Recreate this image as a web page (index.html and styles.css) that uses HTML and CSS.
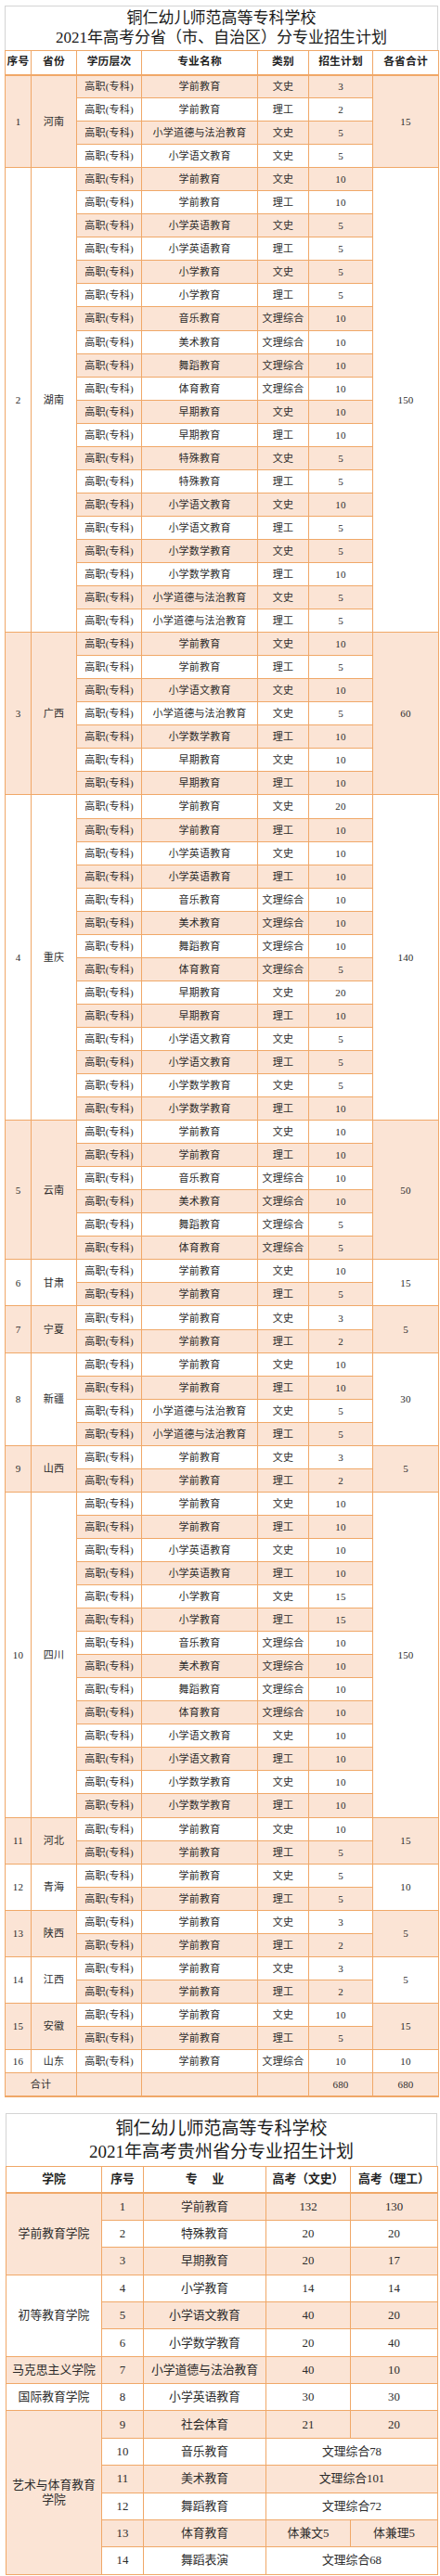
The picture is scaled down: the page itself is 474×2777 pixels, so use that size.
FILE: index.html
```html
<!DOCTYPE html>
<html lang="zh-CN">
<head>
<meta charset="utf-8">
<title>铜仁幼儿师范高等专科学校 2021年招生计划</title>
<link rel="stylesheet" href="styles.css">
</head>
<body>
<div class="page">
  <section class="plan plan-1">
    <div class="title title-1">铜仁幼儿师范高等专科学校<br>2021年高考分省（市、自治区）分专业招生计划</div>
    <table class="t1">
      <colgroup><col class="c1"><col class="c2"><col class="c3"><col class="c4"><col class="c5"><col class="c6"><col class="c7"></colgroup>
      <thead>
        <tr><th>序号</th><th>省份</th><th>学历层次</th><th>专业名称</th><th>类别</th><th>招生计划</th><th>各省合计</th></tr>
      </thead>
      <tbody>
        <tr class="s"><td class="po" rowspan="4">1</td><td class="po" rowspan="4">河南</td><td>高职(专科)</td><td>学前教育</td><td>文史</td><td>3</td><td class="po" rowspan="4">15</td></tr>
        <tr><td>高职(专科)</td><td>学前教育</td><td>理工</td><td>2</td></tr>
        <tr class="s"><td>高职(专科)</td><td>小学道德与法治教育</td><td>文史</td><td>5</td></tr>
        <tr><td>高职(专科)</td><td>小学语文教育</td><td>文史</td><td>5</td></tr>

        <tr class="s"><td class="pw" rowspan="20">2</td><td class="pw" rowspan="20">湖南</td><td>高职(专科)</td><td>学前教育</td><td>文史</td><td>10</td><td class="pw" rowspan="20">150</td></tr>
        <tr><td>高职(专科)</td><td>学前教育</td><td>理工</td><td>10</td></tr>
        <tr class="s"><td>高职(专科)</td><td>小学英语教育</td><td>文史</td><td>5</td></tr>
        <tr><td>高职(专科)</td><td>小学英语教育</td><td>理工</td><td>5</td></tr>
        <tr class="s"><td>高职(专科)</td><td>小学教育</td><td>文史</td><td>5</td></tr>
        <tr><td>高职(专科)</td><td>小学教育</td><td>理工</td><td>5</td></tr>
        <tr class="s"><td>高职(专科)</td><td>音乐教育</td><td>文理综合</td><td>10</td></tr>
        <tr><td>高职(专科)</td><td>美术教育</td><td>文理综合</td><td>10</td></tr>
        <tr class="s"><td>高职(专科)</td><td>舞蹈教育</td><td>文理综合</td><td>10</td></tr>
        <tr><td>高职(专科)</td><td>体育教育</td><td>文理综合</td><td>10</td></tr>
        <tr class="s"><td>高职(专科)</td><td>早期教育</td><td>文史</td><td>10</td></tr>
        <tr><td>高职(专科)</td><td>早期教育</td><td>理工</td><td>10</td></tr>
        <tr class="s"><td>高职(专科)</td><td>特殊教育</td><td>文史</td><td>5</td></tr>
        <tr><td>高职(专科)</td><td>特殊教育</td><td>理工</td><td>5</td></tr>
        <tr class="s"><td>高职(专科)</td><td>小学语文教育</td><td>文史</td><td>10</td></tr>
        <tr><td>高职(专科)</td><td>小学语文教育</td><td>理工</td><td>5</td></tr>
        <tr class="s"><td>高职(专科)</td><td>小学数学教育</td><td>文史</td><td>5</td></tr>
        <tr><td>高职(专科)</td><td>小学数学教育</td><td>理工</td><td>10</td></tr>
        <tr class="s"><td>高职(专科)</td><td>小学道德与法治教育</td><td>文史</td><td>5</td></tr>
        <tr><td>高职(专科)</td><td>小学道德与法治教育</td><td>理工</td><td>5</td></tr>

        <tr class="s"><td class="po" rowspan="7">3</td><td class="po" rowspan="7">广西</td><td>高职(专科)</td><td>学前教育</td><td>文史</td><td>10</td><td class="po" rowspan="7">60</td></tr>
        <tr><td>高职(专科)</td><td>学前教育</td><td>理工</td><td>5</td></tr>
        <tr class="s"><td>高职(专科)</td><td>小学语文教育</td><td>文史</td><td>10</td></tr>
        <tr><td>高职(专科)</td><td>小学道德与法治教育</td><td>文史</td><td>5</td></tr>
        <tr class="s"><td>高职(专科)</td><td>小学数学教育</td><td>理工</td><td>10</td></tr>
        <tr><td>高职(专科)</td><td>早期教育</td><td>文史</td><td>10</td></tr>
        <tr class="s"><td>高职(专科)</td><td>早期教育</td><td>理工</td><td>10</td></tr>

        <tr><td class="pw" rowspan="14">4</td><td class="pw" rowspan="14">重庆</td><td>高职(专科)</td><td>学前教育</td><td>文史</td><td>20</td><td class="pw" rowspan="14">140</td></tr>
        <tr class="s"><td>高职(专科)</td><td>学前教育</td><td>理工</td><td>10</td></tr>
        <tr><td>高职(专科)</td><td>小学英语教育</td><td>文史</td><td>10</td></tr>
        <tr class="s"><td>高职(专科)</td><td>小学英语教育</td><td>理工</td><td>10</td></tr>
        <tr><td>高职(专科)</td><td>音乐教育</td><td>文理综合</td><td>10</td></tr>
        <tr class="s"><td>高职(专科)</td><td>美术教育</td><td>文理综合</td><td>10</td></tr>
        <tr><td>高职(专科)</td><td>舞蹈教育</td><td>文理综合</td><td>10</td></tr>
        <tr class="s"><td>高职(专科)</td><td>体育教育</td><td>文理综合</td><td>5</td></tr>
        <tr><td>高职(专科)</td><td>早期教育</td><td>文史</td><td>20</td></tr>
        <tr class="s"><td>高职(专科)</td><td>早期教育</td><td>理工</td><td>10</td></tr>
        <tr><td>高职(专科)</td><td>小学语文教育</td><td>文史</td><td>5</td></tr>
        <tr class="s"><td>高职(专科)</td><td>小学语文教育</td><td>理工</td><td>5</td></tr>
        <tr><td>高职(专科)</td><td>小学数学教育</td><td>文史</td><td>5</td></tr>
        <tr class="s"><td>高职(专科)</td><td>小学数学教育</td><td>理工</td><td>10</td></tr>

        <tr><td class="po" rowspan="6">5</td><td class="po" rowspan="6">云南</td><td>高职(专科)</td><td>学前教育</td><td>文史</td><td>10</td><td class="po" rowspan="6">50</td></tr>
        <tr class="s"><td>高职(专科)</td><td>学前教育</td><td>理工</td><td>10</td></tr>
        <tr><td>高职(专科)</td><td>音乐教育</td><td>文理综合</td><td>10</td></tr>
        <tr class="s"><td>高职(专科)</td><td>美术教育</td><td>文理综合</td><td>10</td></tr>
        <tr><td>高职(专科)</td><td>舞蹈教育</td><td>文理综合</td><td>5</td></tr>
        <tr class="s"><td>高职(专科)</td><td>体育教育</td><td>文理综合</td><td>5</td></tr>

        <tr><td class="pw" rowspan="2">6</td><td class="pw" rowspan="2">甘肃</td><td>高职(专科)</td><td>学前教育</td><td>文史</td><td>10</td><td class="pw" rowspan="2">15</td></tr>
        <tr class="s"><td>高职(专科)</td><td>学前教育</td><td>理工</td><td>5</td></tr>

        <tr><td class="po" rowspan="2">7</td><td class="po" rowspan="2">宁夏</td><td>高职(专科)</td><td>学前教育</td><td>文史</td><td>3</td><td class="po" rowspan="2">5</td></tr>
        <tr class="s"><td>高职(专科)</td><td>学前教育</td><td>理工</td><td>2</td></tr>

        <tr><td class="pw" rowspan="4">8</td><td class="pw" rowspan="4">新疆</td><td>高职(专科)</td><td>学前教育</td><td>文史</td><td>10</td><td class="pw" rowspan="4">30</td></tr>
        <tr class="s"><td>高职(专科)</td><td>学前教育</td><td>理工</td><td>10</td></tr>
        <tr><td>高职(专科)</td><td>小学道德与法治教育</td><td>文史</td><td>5</td></tr>
        <tr class="s"><td>高职(专科)</td><td>小学道德与法治教育</td><td>理工</td><td>5</td></tr>

        <tr><td class="po" rowspan="2">9</td><td class="po" rowspan="2">山西</td><td>高职(专科)</td><td>学前教育</td><td>文史</td><td>3</td><td class="po" rowspan="2">5</td></tr>
        <tr class="s"><td>高职(专科)</td><td>学前教育</td><td>理工</td><td>2</td></tr>

        <tr><td class="pw" rowspan="14">10</td><td class="pw" rowspan="14">四川</td><td>高职(专科)</td><td>学前教育</td><td>文史</td><td>10</td><td class="pw" rowspan="14">150</td></tr>
        <tr class="s"><td>高职(专科)</td><td>学前教育</td><td>理工</td><td>10</td></tr>
        <tr><td>高职(专科)</td><td>小学英语教育</td><td>文史</td><td>10</td></tr>
        <tr class="s"><td>高职(专科)</td><td>小学英语教育</td><td>理工</td><td>10</td></tr>
        <tr><td>高职(专科)</td><td>小学教育</td><td>文史</td><td>15</td></tr>
        <tr class="s"><td>高职(专科)</td><td>小学教育</td><td>理工</td><td>15</td></tr>
        <tr><td>高职(专科)</td><td>音乐教育</td><td>文理综合</td><td>10</td></tr>
        <tr class="s"><td>高职(专科)</td><td>美术教育</td><td>文理综合</td><td>10</td></tr>
        <tr><td>高职(专科)</td><td>舞蹈教育</td><td>文理综合</td><td>10</td></tr>
        <tr class="s"><td>高职(专科)</td><td>体育教育</td><td>文理综合</td><td>10</td></tr>
        <tr><td>高职(专科)</td><td>小学语文教育</td><td>文史</td><td>10</td></tr>
        <tr class="s"><td>高职(专科)</td><td>小学语文教育</td><td>理工</td><td>10</td></tr>
        <tr><td>高职(专科)</td><td>小学数学教育</td><td>文史</td><td>10</td></tr>
        <tr class="s"><td>高职(专科)</td><td>小学数学教育</td><td>理工</td><td>10</td></tr>

        <tr><td class="po" rowspan="2">11</td><td class="po" rowspan="2">河北</td><td>高职(专科)</td><td>学前教育</td><td>文史</td><td>10</td><td class="po" rowspan="2">15</td></tr>
        <tr class="s"><td>高职(专科)</td><td>学前教育</td><td>理工</td><td>5</td></tr>

        <tr><td class="pw" rowspan="2">12</td><td class="pw" rowspan="2">青海</td><td>高职(专科)</td><td>学前教育</td><td>文史</td><td>5</td><td class="pw" rowspan="2">10</td></tr>
        <tr class="s"><td>高职(专科)</td><td>学前教育</td><td>理工</td><td>5</td></tr>

        <tr><td class="po" rowspan="2">13</td><td class="po" rowspan="2">陕西</td><td>高职(专科)</td><td>学前教育</td><td>文史</td><td>3</td><td class="po" rowspan="2">5</td></tr>
        <tr class="s"><td>高职(专科)</td><td>学前教育</td><td>理工</td><td>2</td></tr>

        <tr><td class="pw" rowspan="2">14</td><td class="pw" rowspan="2">江西</td><td>高职(专科)</td><td>学前教育</td><td>文史</td><td>3</td><td class="pw" rowspan="2">5</td></tr>
        <tr class="s"><td>高职(专科)</td><td>学前教育</td><td>理工</td><td>2</td></tr>

        <tr><td class="po" rowspan="2">15</td><td class="po" rowspan="2">安徽</td><td>高职(专科)</td><td>学前教育</td><td>文史</td><td>10</td><td class="po" rowspan="2">15</td></tr>
        <tr class="s"><td>高职(专科)</td><td>学前教育</td><td>理工</td><td>5</td></tr>

        <tr><td class="pw">16</td><td class="pw">山东</td><td>高职(专科)</td><td>学前教育</td><td>文理综合</td><td>10</td><td class="pw">10</td></tr>

        <tr class="s total"><td colspan="2">合计</td><td></td><td></td><td></td><td>680</td><td>680</td></tr>
      </tbody>
    </table>
  </section>

  <section class="plan plan-2">
    <div class="title title-2">铜仁幼儿师范高等专科学校<br>2021年高考贵州省分专业招生计划</div>
    <table class="t2">
      <colgroup><col class="d1"><col class="d2"><col class="d3"><col class="d4"><col class="d5"></colgroup>
      <thead>
        <tr><th>学院</th><th>序号</th><th>专　 业</th><th>高考（文史）</th><th>高考（理工）</th></tr>
      </thead>
      <tbody>
        <tr class="s"><td class="po college" rowspan="3">学前教育学院</td><td>1</td><td>学前教育</td><td>132</td><td>130</td></tr>
        <tr><td>2</td><td>特殊教育</td><td>20</td><td>20</td></tr>
        <tr class="s"><td>3</td><td>早期教育</td><td>20</td><td>17</td></tr>
        <tr><td class="pw college" rowspan="3">初等教育学院</td><td>4</td><td>小学教育</td><td>14</td><td>14</td></tr>
        <tr class="s"><td>5</td><td>小学语文教育</td><td>40</td><td>20</td></tr>
        <tr><td>6</td><td>小学数学教育</td><td>20</td><td>40</td></tr>
        <tr class="s"><td class="po college">马克思主义学院</td><td>7</td><td>小学道德与法治教育</td><td>40</td><td>10</td></tr>
        <tr><td class="pw college">国际教育学院</td><td>8</td><td>小学英语教育</td><td>30</td><td>30</td></tr>
        <tr class="s"><td class="po college wrap" rowspan="6">艺术与体育教育学院</td><td>9</td><td>社会体育</td><td>21</td><td>20</td></tr>
        <tr><td>10</td><td>音乐教育</td><td colspan="2">文理综合78</td></tr>
        <tr class="s"><td>11</td><td>美术教育</td><td colspan="2">文理综合101</td></tr>
        <tr><td>12</td><td>舞蹈教育</td><td colspan="2">文理综合72</td></tr>
        <tr class="s"><td>13</td><td>体育教育</td><td>体兼文5</td><td>体兼理5</td></tr>
        <tr><td>14</td><td>舞蹈表演</td><td colspan="2">文理综合68</td></tr>
      </tbody>
    </table>
  </section>
</div>
</body>
</html>
```

FILE: styles.css
```css
* { box-sizing: border-box; }

html, body {
  margin: 0;
  padding: 0;
  background: #ffffff;
}

body {
  font-family: "Liberation Serif", "Noto Sans CJK SC", serif;
  color: #2b2b2b;
}

.page {
  width: 474px;
  padding: 6px 2px 6px 5px;
}

.plan-1 { width: 467px; }

.plan-2 {
  width: 465px;
  margin: 17px 0 0 1px;
}

.title {
  border: 1px solid #d4d4d4;
  border-bottom: none;
  text-align: center;
  color: #1a1a1a;
}

.title-1 {
  font-size: 17px;
  line-height: 21px;
  padding: 2px 0 3px;
}

.title-2 {
  font-size: 19px;
  line-height: 25px;
  padding: 3px 0 3px;
}

table {
  width: 100%;
  border-collapse: collapse;
  table-layout: fixed;
}

th, td {
  border: 1px solid #f0a868;
  padding: 0;
  text-align: center;
  vertical-align: middle;
  white-space: nowrap;
}

th {
  font-weight: bold;
  color: #222;
}

thead th { border-bottom-width: 2px; }

.s > td { background: #fbe4d5; }
td.pw { background: #ffffff; }
td.po { background: #fbe4d5; }

/* table 1 */
.t1 {
  font-size: 11px;
  line-height: 14px;
  letter-spacing: 0.2px;
}
.t1 thead tr { height: 26px; }
.t1 th { font-size: 11.7px; }
.t1 tbody tr { height: 25.05px; }
.t1 .total td { border-bottom-width: 2px; }

.c1 { width: 28px; }
.c2 { width: 49px; }
.c3 { width: 70px; }
.c4 { width: 125px; }
.c5 { width: 55px; }
.c6 { width: 69px; }
.c7 { width: 71px; }

/* table 2 */
.t2 {
  font-size: 12.8px;
  line-height: 16px;
}
.t2 thead tr { height: 29px; }
.t2 tbody tr { height: 29.36px; }
.t2 .college { padding: 0 4px; }
.t2 .wrap { white-space: normal; }

.d1 { width: 103px; }
.d2 { width: 45px; }
.d3 { width: 132px; }
.d4 { width: 91px; }
.d5 { width: 94px; }
```
